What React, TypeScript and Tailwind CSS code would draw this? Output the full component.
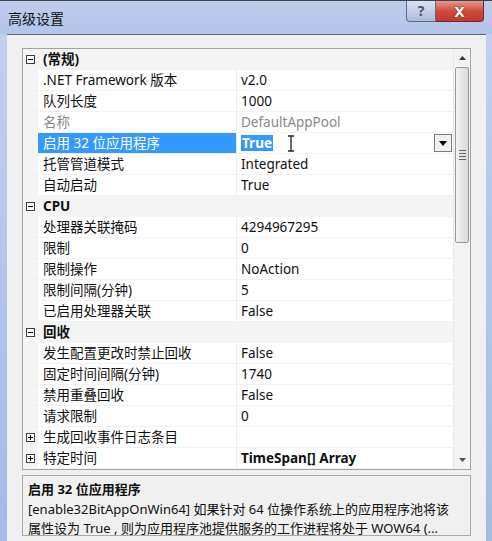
import type { ReactNode } from 'react'

const FONT = '"Noto Sans", "Noto Sans CJK SC", sans-serif'

type Row =
  | { kind: 'cat'; label: string; open: boolean }
  | { kind: 'prop'; label: string; value: string; dim?: boolean; bold?: boolean; selected?: boolean; sub?: boolean }

const rows: Row[] = [
  { kind: 'cat', label: '(常规)', open: true },
  { kind: 'prop', label: '.NET Framework 版本', value: 'v2.0' },
  { kind: 'prop', label: '队列长度', value: '1000' },
  { kind: 'prop', label: '名称', value: 'DefaultAppPool', dim: true },
  { kind: 'prop', label: '启用 32 位应用程序', value: 'True', selected: true },
  { kind: 'prop', label: '托管管道模式', value: 'Integrated' },
  { kind: 'prop', label: '自动启动', value: 'True' },
  { kind: 'cat', label: 'CPU', open: true },
  { kind: 'prop', label: '处理器关联掩码', value: '4294967295' },
  { kind: 'prop', label: '限制', value: '0' },
  { kind: 'prop', label: '限制操作', value: 'NoAction' },
  { kind: 'prop', label: '限制间隔(分钟)', value: '5' },
  { kind: 'prop', label: '已启用处理器关联', value: 'False' },
  { kind: 'cat', label: '回收', open: true },
  { kind: 'prop', label: '发生配置更改时禁止回收', value: 'False' },
  { kind: 'prop', label: '固定时间间隔(分钟)', value: '1740' },
  { kind: 'prop', label: '禁用重叠回收', value: 'False' },
  { kind: 'prop', label: '请求限制', value: '0' },
  { kind: 'prop', label: '生成回收事件日志条目', value: '', sub: true },
  { kind: 'prop', label: '特定时间', value: 'TimeSpan[] Array', bold: true, sub: true },
]

function Expander({ open }: { open: boolean }) {
  return (
    <svg width="9" height="9" viewBox="0 0 9 9" className="block">
      <rect x="0.5" y="0.5" width="8" height="8" fill="#fff" stroke="#404040" />
      <line x1="2" y1="4.5" x2="7" y2="4.5" stroke="#000" />
      {!open && <line x1="4.5" y1="2" x2="4.5" y2="7" stroke="#000" />}
    </svg>
  )
}

function Gutter({ children }: { children?: ReactNode }) {
  return <div className="flex w-[15px] shrink-0 items-center justify-center bg-[#f4f4f4]">{children}</div>
}

function GridRow({ row }: { row: Row }) {
  if (row.kind === 'cat') {
    return (
      <div className="flex h-[21px] shrink-0 bg-[#f4f4f4]">
        <Gutter>
          <Expander open={row.open} />
        </Gutter>
        <div className="flex items-center pl-[5px] font-bold text-[#111]">{row.label}</div>
      </div>
    )
  }
  return (
    <div className="flex h-[21px] shrink-0 border-b border-[#f2f2f2]">
      <Gutter>{row.sub && <Expander open={false} />}</Gutter>
      <div
        className={
          'flex w-[199px] shrink-0 items-center overflow-hidden whitespace-nowrap border-r border-[#ececec] pl-[5px] ' +
          (row.selected ? 'bg-[#3399ff] text-white' : row.dim ? 'text-[#8a8a8a]' : 'text-[#111]')
        }
      >
        {row.label}
      </div>
      <div className={'relative flex flex-1 items-center pl-[4px] ' + (row.dim ? 'text-[#8a8a8a]' : 'text-[#111]')}>
        {row.selected ? (
          <>
            <span className="bg-[#3399ff] px-[1px] font-bold leading-[16px] text-white">{row.value}</span>
            <svg width="8" height="17" viewBox="0 0 8 17" className="ml-[14px]">
              <path d="M1 1h6M4 1v15M1 16h6" stroke="#222" strokeWidth="1.3" fill="none" />
            </svg>
            <div className="ml-auto mr-[1px] flex h-[18px] w-[18px] items-center justify-center border border-[#7a7a7a] bg-[#f0f0f0]">
              <svg width="8" height="5" viewBox="0 0 8 5">
                <path d="M0 0h8L4 5z" fill="#000" />
              </svg>
            </div>
          </>
        ) : (
          <span className={row.bold ? 'font-bold' : ''}>{row.value}</span>
        )}
      </div>
    </div>
  )
}

function ScrollBar() {
  return (
    <div className="flex w-[17px] shrink-0 flex-col border-l border-[#e8e8e8] bg-[#f3f3f3]">
      <div className="flex h-[18px] items-center justify-center">
        <svg width="7" height="4" viewBox="0 0 7 4">
          <path d="M0 4L3.5 0L7 4z" fill="#333" />
        </svg>
      </div>
      <div className="mx-[1px] flex h-[176px] items-center justify-center rounded-[2px] border border-[#9a9a9a] bg-gradient-to-r from-[#f2f2f2] via-[#e6e6e6] to-[#d8d8d8]">
        <div className="flex flex-col gap-[2px]">
          <div className="h-px w-[7px] bg-[#666]" />
          <div className="h-px w-[7px] bg-[#666]" />
          <div className="h-px w-[7px] bg-[#666]" />
          <div className="h-px w-[7px] bg-[#666]" />
        </div>
      </div>
      <div className="flex-1" />
      <div className="flex h-[18px] items-center justify-center">
        <svg width="7" height="4" viewBox="0 0 7 4">
          <path d="M0 0h7L3.5 4z" fill="#555" />
        </svg>
      </div>
    </div>
  )
}

export default function App() {
  return (
    <div
      className="flex h-[541px] w-[492px] flex-col overflow-hidden bg-gradient-to-b from-[#c3d1ee] to-[#a7bae4] text-[13.5px]"
      style={{ fontFamily: FONT }}
    >
      <div className="flex h-[34px] shrink-0 items-start justify-between border-t border-[#3b4250] bg-gradient-to-b from-[#bfcdeb] to-[#b2c4ea] pl-[8px] pr-[8px]">
        <div className="pt-[9px] text-[14px] leading-[18px] text-[#111]">高级设置</div>
        <div className="flex">
          <div className="flex h-[21px] w-[30px] items-center justify-center rounded-bl-[4px] border border-t-0 border-[#5c6b88] bg-gradient-to-b from-[#dbe3f2] to-[#aebcd8] text-[14px] font-bold leading-none text-[#4a5670]">
            ?
          </div>
          <div className="flex h-[21px] w-[48px] items-center justify-center rounded-br-[4px] border border-l-0 border-t-0 border-[#6b2b2b] bg-gradient-to-b from-[#e59a8c] via-[#cf4a3c] to-[#c2392f] text-[15px] font-bold leading-none text-white [text-shadow:0_0_2px_#5a1a1a]">
            X
          </div>
        </div>
      </div>
      <div className="ml-[7px] mr-[6px] flex flex-1 flex-col border-t border-[#5b6577] bg-[#f0f0f0] px-[15px] pt-[13px]">
        <div className="flex h-[422px] shrink-0 overflow-hidden border border-[#a3a3a3] bg-white">
          <div className="flex flex-1 flex-col overflow-hidden">
            {rows.map((r, i) => (
              <GridRow key={i} row={r} />
            ))}
          </div>
          <ScrollBar />
        </div>
        <div className="mt-[5px] h-[61px] shrink-0 border border-[#a9a9a9] bg-[#f0f0f0] px-[5px] pt-[4px] text-[13px] leading-[19.5px] text-[#111]">
          <div className="font-bold">启用 32 位应用程序</div>
          <div className="whitespace-nowrap">[enable32BitAppOnWin64] 如果针对 64 位操作系统上的应用程序池将该</div>
          <div className="whitespace-nowrap">属性设为 True , 则为应用程序池提供服务的工作进程将处于 WOW64 (...</div>
        </div>
      </div>
    </div>
  )
}
